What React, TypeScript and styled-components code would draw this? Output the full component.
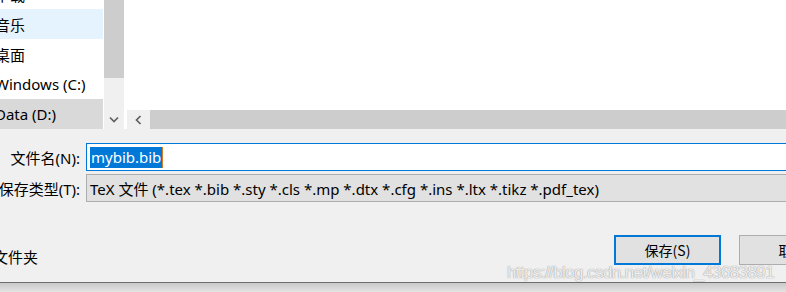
import React from "react";
import styled, { createGlobalStyle } from "styled-components";

const GlobalStyle = createGlobalStyle`
  html, body {
    margin: 0;
    padding: 0;
    background: #f0f0f0;
    overflow: hidden;
  }
  body {
    font-family: "Noto Sans", "Noto Sans CJK SC", sans-serif;
    font-size: 15px;
    color: #000;
  }
`;

const Dialog = styled.div`
  position: relative;
  width: 786px;
  height: 292px;
  overflow: hidden;
  display: flex;
  flex-direction: column;
  background: #f0f0f0;
`;

const Browser = styled.div`
  height: 129px;
  display: flex;
  background: #fff;
`;

const NavPane = styled.div`
  width: 103px;
  overflow: hidden;
  border-right: 1px solid #fff;
`;

const NavList = styled.div`
  margin-top: -21px;
  display: flex;
  flex-direction: column;
`;

interface NavItemProps {
  state?: "hover" | "selected";
}

const NavItem = styled.div<NavItemProps>`
  height: 30px;
  display: flex;
  align-items: center;
  white-space: nowrap;
  text-indent: -5px;
  background: ${(p) =>
    p.state === "hover" ? "#e5f3ff" : p.state === "selected" ? "#d9d9d9" : "transparent"};
`;

const VScroll = styled.div`
  width: 20px;
  display: flex;
  flex-direction: column;
  background: #f0f0f0;
`;

const VThumb = styled.div`
  height: 78px;
  background: #cdcdcd;
`;

const Spacer = styled.div`
  flex: 1;
`;

const ArrowButton = styled.div`
  width: 20px;
  height: 19px;
  display: flex;
  align-items: center;
  justify-content: center;
  background: #f0f0f0;
`;

const Gap = styled.div`
  width: 3px;
  background: #fff;
`;

const Content = styled.div`
  flex: 1;
  display: flex;
  flex-direction: column;
`;

const HScroll = styled.div`
  height: 19px;
  display: flex;
`;

const HArrow = styled(ArrowButton)`
  width: 23px;
`;

const HThumb = styled.div`
  flex: 1;
  background: #cdcdcd;
`;

const Form = styled.div`
  display: grid;
  grid-template-columns: 80px 1fr;
  column-gap: 6px;
  row-gap: 3px;
  padding-top: 14px;
  margin-right: -30px;
`;

const Label = styled.div`
  width: 80px;
  height: 28px;
  display: flex;
  align-items: center;
  justify-content: flex-end;
  white-space: nowrap;
`;

const NameInput = styled.div`
  height: 28px;
  box-sizing: border-box;
  border: 1px solid #0078d7;
  background: #fff;
  display: flex;
  align-items: center;
  padding-left: 3px;
`;

const Selection = styled.span`
  background: #0078d7;
  color: #fff;
  height: 21px;
  line-height: 21px;
  padding: 0 1px;
`;

const Caret = styled.span`
  width: 1px;
  height: 21px;
  background: #d47b25;
`;

const TypeSelect = styled.div`
  height: 28px;
  box-sizing: border-box;
  border: 1px solid #adadad;
  background: #e1e1e1;
  display: flex;
  align-items: center;
  padding-left: 3px;
  white-space: nowrap;
`;

const Footer = styled.div`
  height: 80px;
  box-sizing: border-box;
  padding-top: 33px;
  display: grid;
  grid-template-columns: 596px 107px 107px;
  column-gap: 18px;
  align-items: start;
`;

const FolderToggle = styled.div`
  width: 38px;
  display: flex;
  justify-content: flex-end;
  white-space: nowrap;
  margin-top: 11px;
`;

interface ButtonProps {
  primary?: boolean;
}

const Button = styled.div<ButtonProps>`
  height: 30px;
  box-sizing: border-box;
  border: ${(p) => (p.primary ? "2px solid #0078d7" : "1px solid #adadad")};
  background: #e1e1e1;
  display: flex;
  align-items: center;
  justify-content: center;
  font-family: "Noto Sans CJK SC", "Liberation Serif", serif;
  font-size: 14px;
  white-space: nowrap;
`;

const BottomEdge = styled.div`
  border-top: 1px solid #6e6e6e;
  flex: 1;
  background: linear-gradient(#c9c9c9, #e4e4e4);
`;

const Watermark = styled.div`
  position: absolute;
  left: 507px;
  top: 263px;
  font-family: "Liberation Sans", sans-serif;
  font-size: 17px;
  letter-spacing: -0.6px;
  color: rgba(255, 255, 255, 0.85);
  text-shadow: 0 0 1px rgba(120, 120, 120, 0.6), 0 0 1px rgba(120, 120, 120, 0.6);
  white-space: nowrap;
`;

const Down = () => (
  <svg width="10" height="7" viewBox="0 0 10 7">
    <path d="M1 1.5 L5 5.5 L9 1.5" fill="none" stroke="#606060" strokeWidth="1.7" />
  </svg>
);

const Left = () => (
  <svg width="7" height="10" viewBox="0 0 7 10">
    <path d="M5.5 1 L1.5 5 L5.5 9" fill="none" stroke="#606060" strokeWidth="1.7" />
  </svg>
);

const navItems: { label: string; state?: "hover" | "selected" }[] = [
  { label: "下载" },
  { label: "音乐", state: "hover" },
  { label: "桌面" },
  { label: "Windows (C:)" },
  { label: "Data (D:)", state: "selected" },
];

export default function App() {
  return (
    <Dialog>
      <GlobalStyle />
      <Browser>
        <NavPane>
          <NavList>
            {navItems.map((item) => (
              <NavItem key={item.label} state={item.state}>
                {item.label}
              </NavItem>
            ))}
          </NavList>
        </NavPane>
        <VScroll>
          <VThumb />
          <Spacer />
          <ArrowButton>
            <Down />
          </ArrowButton>
        </VScroll>
        <Gap />
        <Content>
          <Spacer />
          <HScroll>
            <HArrow>
              <Left />
            </HArrow>
            <HThumb />
          </HScroll>
        </Content>
      </Browser>

      <Form>
        <Label>文件名(N):</Label>
        <NameInput>
          <Selection>mybib.bib</Selection>
          <Caret />
        </NameInput>
        <Label>保存类型(T):</Label>
        <TypeSelect>
          TeX 文件 (*.tex *.bib *.sty *.cls *.mp *.dtx *.cfg *.ins *.ltx *.tikz *.pdf_tex)
        </TypeSelect>
      </Form>

      <Footer>
        <FolderToggle>隐藏文件夹</FolderToggle>
        <Button primary>保存(S)</Button>
        <Button>取消</Button>
      </Footer>
      <BottomEdge />
      <Watermark>https://blog.csdn.net/weixin_43683891</Watermark>
    </Dialog>
  );
}
